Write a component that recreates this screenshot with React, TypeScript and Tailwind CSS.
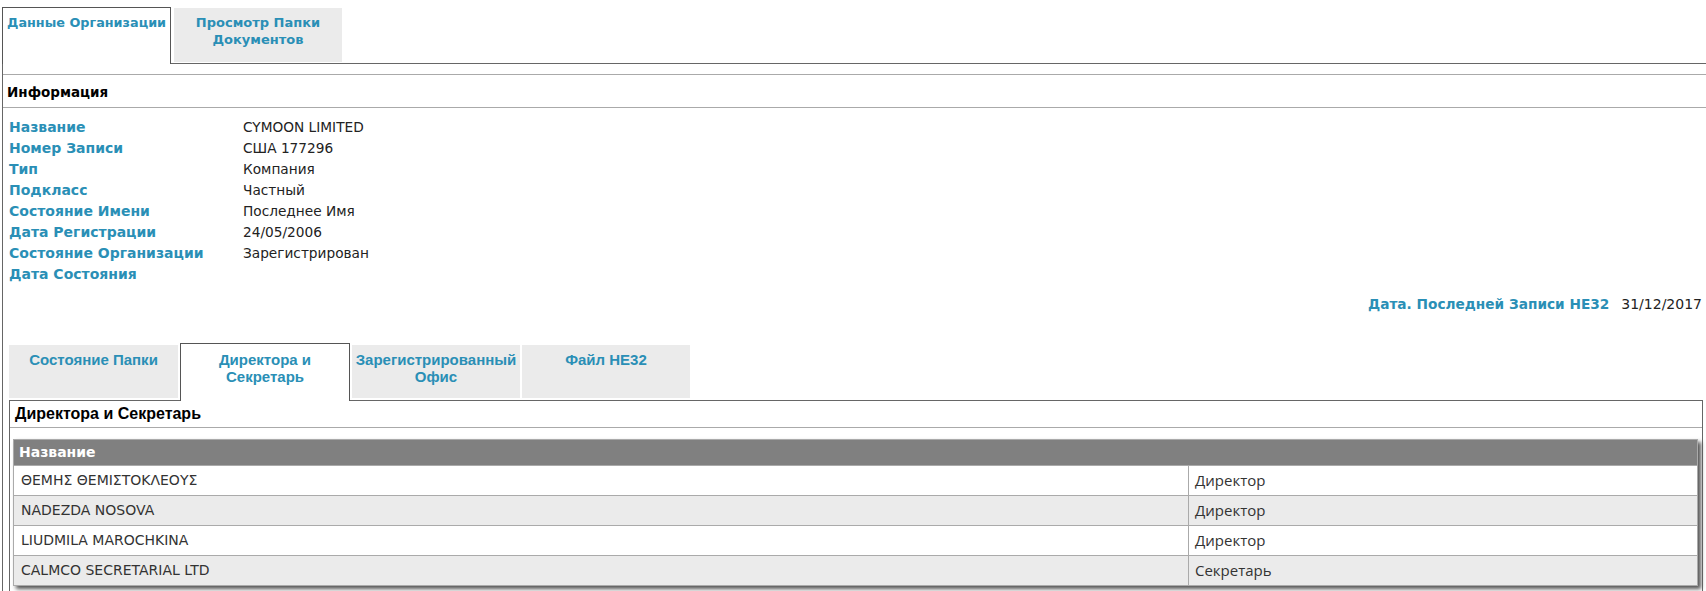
const infoRows: [string, string][] = [
  ["Название", "CYMOON LIMITED"],
  ["Номер Записи", "США 177296"],
  ["Тип", "Компания"],
  ["Подкласс", "Частный"],
  ["Состояние Имени", "Последнее Имя"],
  ["Дата Регистрации", "24/05/2006"],
  ["Состояние Организации", "Зарегистрирован"],
  ["Дата Состояния", ""],
];

const officers: [string, string][] = [
  ["ΘΕΜΗΣ ΘΕΜΙΣΤΟΚΛΕΟΥΣ", "Директор"],
  ["NADEZDA NOSOVA", "Директор"],
  ["LIUDMILA MAROCHKINA", "Директор"],
  ["CALMCO SECRETARIAL LTD", "Секретарь"],
];

const verdana = "font-['Verdana','DejaVu_Sans',sans-serif]";
const arial = "font-['Arial','Liberation_Sans',sans-serif]";

export default function App() {
  return (
    <div className={`h-[591px] w-[1706px] overflow-hidden bg-white text-[#222] ${verdana}`}>
      {/* top tabs */}
      <div className="ml-[2px] flex items-start border-b border-[#666] pt-[7px]">
        <div className="relative z-10 -mb-px h-[57px] w-[169px] whitespace-nowrap border border-b-0 border-[#555] bg-white px-[4px] pt-[6px] text-[12.8px] font-bold leading-[17px] text-[#2a8fb6]">
          Данные Организации
        </div>
        <div className="ml-[3px] mt-[1px] h-[54px] w-[168px] bg-[#ebebeb] pt-[6px] text-center text-[13px] font-bold leading-[17px] text-[#2a8fb6]">
          Просмотр Папки
          <br />
          Документов
        </div>
      </div>

      <div className="ml-[2px] border-l border-[#666] pt-[10px]">
        <div className="flex h-[34px] items-center border-y border-[#aaa] pl-[4px] pt-[2px] text-[13.5px] font-bold text-black">
          Информация
        </div>

        <div className="mt-[9px] pl-[6px]">
          {infoRows.map(([label, value]) => (
            <div key={label} className="grid h-[21px] grid-cols-[234px_1fr] items-center leading-[21px]">
              <span className="text-[14px] font-bold text-[#2a8fb6]">{label}</span>
              <span className="text-[13.7px] text-[#222]">{value}</span>
            </div>
          ))}
        </div>

        <div className="mt-[9px] flex h-[21px] items-center justify-end pr-[4px] leading-[21px]">
          <span className="text-[13.7px] font-bold text-[#2a8fb6]">Дата. Последней Записи НЕ32</span>
          <span className="ml-[12px] text-[14px] text-[#222]">31/12/2017</span>
        </div>

        {/* lower tabs + panel */}
        <div className="ml-[6px] mt-[28px] w-[1694px]">
          <div className={`flex items-start border-b border-[#666] text-[15px] font-bold leading-[17px] text-[#2a8fb6] ${arial}`}>
            <div className="mt-[2px] h-[53px] w-[169px] bg-[#ebebeb] pt-[6px] text-center">Состояние Папки</div>
            <div className="relative z-10 -mb-px ml-[2px] h-[58px] w-[170px] border border-b-0 border-[#555] bg-white pt-[7px] text-center">
              Директора и
              <br />
              Секретарь
            </div>
            <div className="ml-[2px] mt-[2px] h-[53px] w-[168px] bg-[#ebebeb] pt-[6px] text-center">
              Зарегистрированный
              <br />
              Офис
            </div>
            <div className="ml-[2px] mt-[2px] h-[53px] w-[168px] bg-[#ebebeb] pt-[6px] text-center">Файл НЕ32</div>
          </div>

          <div className="border-x border-[#666] pb-[20px]">
            <div className={`flex h-[27px] items-center border-b border-[#aaa] pl-[5px] text-[16px] font-bold text-black ${arial}`}>
              Директора и Секретарь
            </div>

            <div className="ml-[3px] mr-[4px] mt-[11px] border border-[#aaa] shadow-[3px_3px_4px_#555]">
              <div className="flex h-[25px] items-center bg-[#808080] pl-[5px] text-[14px] font-bold text-white">
                Название
              </div>
              {officers.map(([name, role], i) => (
                <div
                  key={name}
                  className={`grid h-[30px] grid-cols-[1174px_1fr] border-t border-[#aaa] ${
                    i % 2 === 1 ? "bg-[#ebebeb]" : "bg-white"
                  }`}
                >
                  <div className="flex items-center pl-[7px] text-[14px] text-[#333]">{name}</div>
                  <div className="flex items-center border-l border-[#aaa] pl-[6px] font-['Open_Sans',sans-serif] text-[15px] text-[#333]">
                    {role}
                  </div>
                </div>
              ))}
            </div>
          </div>
        </div>
      </div>
    </div>
  );
}
